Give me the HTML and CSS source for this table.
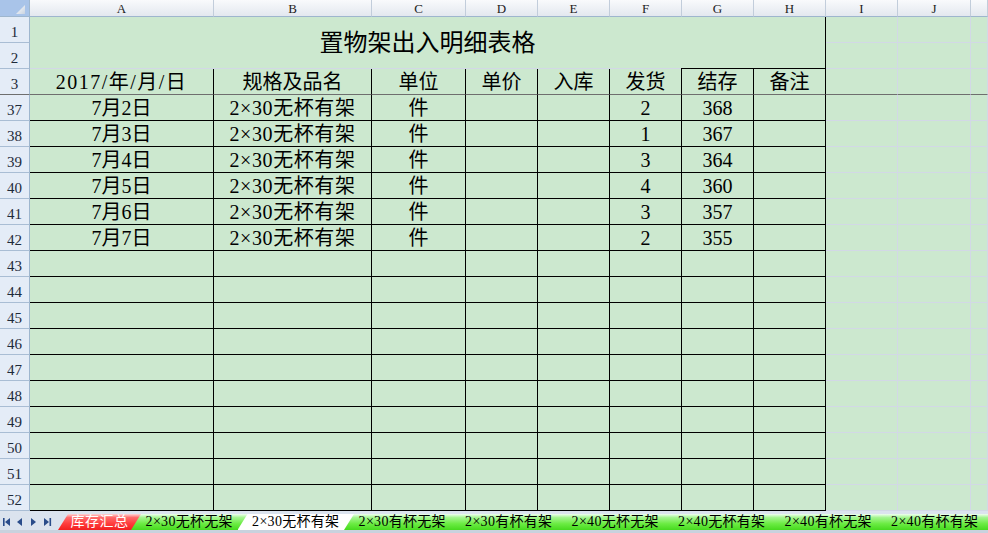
FILE: index.html
```html
<!DOCTYPE html>
<html lang="zh">
<head>
<meta charset="utf-8">
<title>置物架出入明细表格</title>
<link rel="stylesheet" href="styles.css">
</head>
<body>
<div class="sheet">
  <div class="corner"><svg width="29" height="16" viewBox="0 0 29 16"><defs><linearGradient id="tg" x1="0" y1="0" x2="1" y2="1"><stop offset="0" stop-color="#ffffff"/><stop offset="1" stop-color="#c9d3e0"/></linearGradient></defs><polygon points="25,5 25,14 16,14" fill="url(#tg)"/></svg></div>
  <div class="ch">A</div><div class="ch">B</div><div class="ch">C</div><div class="ch">D</div><div class="ch">E</div><div class="ch">F</div><div class="ch">G</div><div class="ch">H</div><div class="ch">I</div><div class="ch">J</div><div class="ch"></div>

  <div class="rh">1</div><div class="c title">置物架出入明细表格</div><div class="c"></div><div class="c"></div><div class="c"></div>
  <div class="rh">2</div><div class="c"></div><div class="c"></div><div class="c"></div>

  <div class="rh fz">3</div><div class="c t fz wide">2017/年/月/日</div><div class="c t fz">规格及品名</div><div class="c t fz">单位</div><div class="c t fz">单价</div><div class="c t fz">入库</div><div class="c t fz">发货</div><div class="c t fz">结存</div><div class="c t fz">备注</div><div class="c fz"></div><div class="c fz"></div><div class="c fz"></div>

  <div class="rh">37</div><div class="c t">7月2日</div><div class="c t spec">2×30无杯有架</div><div class="c t">件</div><div class="c t"></div><div class="c t"></div><div class="c t">2</div><div class="c t">368</div><div class="c t"></div><div class="c"></div><div class="c"></div><div class="c"></div>
  <div class="rh">38</div><div class="c t">7月3日</div><div class="c t spec">2×30无杯有架</div><div class="c t">件</div><div class="c t"></div><div class="c t"></div><div class="c t">1</div><div class="c t">367</div><div class="c t"></div><div class="c"></div><div class="c"></div><div class="c"></div>
  <div class="rh">39</div><div class="c t">7月4日</div><div class="c t spec">2×30无杯有架</div><div class="c t">件</div><div class="c t"></div><div class="c t"></div><div class="c t">3</div><div class="c t">364</div><div class="c t"></div><div class="c"></div><div class="c"></div><div class="c"></div>
  <div class="rh">40</div><div class="c t">7月5日</div><div class="c t spec">2×30无杯有架</div><div class="c t">件</div><div class="c t"></div><div class="c t"></div><div class="c t">4</div><div class="c t">360</div><div class="c t"></div><div class="c"></div><div class="c"></div><div class="c"></div>
  <div class="rh">41</div><div class="c t">7月6日</div><div class="c t spec">2×30无杯有架</div><div class="c t">件</div><div class="c t"></div><div class="c t"></div><div class="c t">3</div><div class="c t">357</div><div class="c t"></div><div class="c"></div><div class="c"></div><div class="c"></div>
  <div class="rh">42</div><div class="c t">7月7日</div><div class="c t spec">2×30无杯有架</div><div class="c t">件</div><div class="c t"></div><div class="c t"></div><div class="c t">2</div><div class="c t">355</div><div class="c t"></div><div class="c"></div><div class="c"></div><div class="c"></div>

  <div class="rh">43</div><div class="c t"></div><div class="c t"></div><div class="c t"></div><div class="c t"></div><div class="c t"></div><div class="c t"></div><div class="c t"></div><div class="c t"></div><div class="c"></div><div class="c"></div><div class="c"></div>
  <div class="rh">44</div><div class="c t"></div><div class="c t"></div><div class="c t"></div><div class="c t"></div><div class="c t"></div><div class="c t"></div><div class="c t"></div><div class="c t"></div><div class="c"></div><div class="c"></div><div class="c"></div>
  <div class="rh">45</div><div class="c t"></div><div class="c t"></div><div class="c t"></div><div class="c t"></div><div class="c t"></div><div class="c t"></div><div class="c t"></div><div class="c t"></div><div class="c"></div><div class="c"></div><div class="c"></div>
  <div class="rh">46</div><div class="c t"></div><div class="c t"></div><div class="c t"></div><div class="c t"></div><div class="c t"></div><div class="c t"></div><div class="c t"></div><div class="c t"></div><div class="c"></div><div class="c"></div><div class="c"></div>
  <div class="rh">47</div><div class="c t"></div><div class="c t"></div><div class="c t"></div><div class="c t"></div><div class="c t"></div><div class="c t"></div><div class="c t"></div><div class="c t"></div><div class="c"></div><div class="c"></div><div class="c"></div>
  <div class="rh">48</div><div class="c t"></div><div class="c t"></div><div class="c t"></div><div class="c t"></div><div class="c t"></div><div class="c t"></div><div class="c t"></div><div class="c t"></div><div class="c"></div><div class="c"></div><div class="c"></div>
  <div class="rh">49</div><div class="c t"></div><div class="c t"></div><div class="c t"></div><div class="c t"></div><div class="c t"></div><div class="c t"></div><div class="c t"></div><div class="c t"></div><div class="c"></div><div class="c"></div><div class="c"></div>
  <div class="rh">50</div><div class="c t"></div><div class="c t"></div><div class="c t"></div><div class="c t"></div><div class="c t"></div><div class="c t"></div><div class="c t"></div><div class="c t"></div><div class="c"></div><div class="c"></div><div class="c"></div>
  <div class="rh">51</div><div class="c t"></div><div class="c t"></div><div class="c t"></div><div class="c t"></div><div class="c t"></div><div class="c t"></div><div class="c t"></div><div class="c t"></div><div class="c"></div><div class="c"></div><div class="c"></div>
  <div class="rh">52</div><div class="c t"></div><div class="c t"></div><div class="c t"></div><div class="c t"></div><div class="c t"></div><div class="c t"></div><div class="c t"></div><div class="c t"></div><div class="c"></div><div class="c"></div><div class="c"></div>
</div>
<div class="tabbar">
  <div class="nav"><svg width="58" height="16" viewBox="0 0 58 16"><g fill="#2a4c8a"><rect x="3" y="4" width="1.6" height="8"/><polygon points="10,4 5,8 10,12"/><polygon points="22,4 17,8 22,12"/><polygon points="31,4 36,8 31,12"/><polygon points="44,4 49,8 44,12"/><rect x="49.5" y="4" width="1.6" height="8"/></g></svg></div>
  <div class="tab red">库存汇总</div>
  <div class="tab green">2×30无杯无架</div>
  <div class="tab active">2×30无杯有架</div>
  <div class="tab green">2×30有杯无架</div>
  <div class="tab green">2×30有杯有架</div>
  <div class="tab green">2×40无杯无架</div>
  <div class="tab green">2×40无杯有架</div>
  <div class="tab green">2×40有杯无架</div>
  <div class="tab green">2×40有杯有架</div>
</div>
</body>
</html>
```

FILE: styles.css
```css
html, body {
  margin: 0;
  padding: 0;
}
body {
  width: 988px;
  height: 533px;
  overflow: hidden;
  background: #cce8cf;
  font-family: "Liberation Serif", "Noto Sans CJK SC", serif;
  color: #000;
}
.sheet {
  display: grid;
  grid-template-columns: 30px 184px 158px 94px 72px 72px 72px 72px 72px 72px 73px 17px;
  grid-template-rows: 17px repeat(19, 26px);
}
.sheet > div {
  box-sizing: border-box;
  min-width: 0;
  overflow: hidden;
}
.corner {
  background: #a9c4e9;
  border-right: 1px solid #9eb6ce;
  border-bottom: 1px solid #9eb6ce;
}
.corner svg {
  display: block;
}
.ch {
  background: linear-gradient(#f9fafc, #e3e8ef);
  border-right: 1px solid #c2cddb;
  border-bottom: 1px solid #9eb6ce;
  display: flex;
  align-items: center;
  justify-content: center;
  font-size: 13px;
  color: #222;
  line-height: 1;
}
.rh {
  background: #e4ecf7;
  border-right: 1px solid #9eb6ce;
  border-bottom: 1px solid #a9bdd4;
  display: flex;
  align-items: flex-end;
  justify-content: center;
  padding-bottom: 2px;
  font-size: 15px;
  line-height: 1;
  color: #1e2a3a;
}
.c {
  background: #cce8cf;
  border-right: 1px solid #d2d8e6;
  border-bottom: 1px solid #d2d8e6;
  display: flex;
  align-items: center;
  justify-content: center;
  font-size: 20px;
  line-height: 1;
  white-space: nowrap;
  padding-top: 1px;
}
.wide {
  letter-spacing: 1.5px;
}
.spec {
  letter-spacing: 0.6px;
}
.t {
  border-right-color: #000;
  border-bottom-color: #000;
}
.fz {
  border-bottom: 1px solid #6e6e6e;
}
.sheet > .title {
  grid-column: span 8;
  grid-row: span 2;
  border-right: 1px solid #000;
  border-bottom: 0;
  background:
    linear-gradient(#000, #000) right bottom / 144px 1px no-repeat,
    linear-gradient(#d2d8e6, #d2d8e6) left bottom / 100% 1px no-repeat,
    #cce8cf;
  font-size: 24px;
  padding-top: 0;
}
.tabbar {
  display: flex;
  height: 22px;
  box-sizing: border-box;
  padding-top: 3px;
  background: #dbe3ee;
  border-bottom: 3px solid #c9d2de;
  overflow: hidden;
}
.nav {
  width: 58px;
  flex: none;
}
.nav svg {
  display: block;
}
.tab {
  flex: none;
  box-sizing: border-box;
  height: 16px;
  width: 116.5px;
  margin-left: -10px;
  padding: 0 10px 0 10px;
  clip-path: polygon(0 100%, 10px 0, 100% 0, 100% 100%);
  display: flex;
  align-items: center;
  justify-content: center;
  font-size: 14px;
  line-height: 1;
  white-space: nowrap;
  color: #000;
  letter-spacing: 0.3px;
}
.tab.red {
  margin-left: 0;
  width: 83px;
  color: #fff;
  letter-spacing: 0.5px;
  background: linear-gradient(#ffd6d6 0%, #ff6a6a 22%, #ff3c3c 60%, #f22020 100%);
}
.tab.green {
  background: linear-gradient(#effff0 0%, #a4f590 22%, #6cec44 60%, #46da1e 100%);
}
.tab.active {
  background: #ffffff;
}
```
